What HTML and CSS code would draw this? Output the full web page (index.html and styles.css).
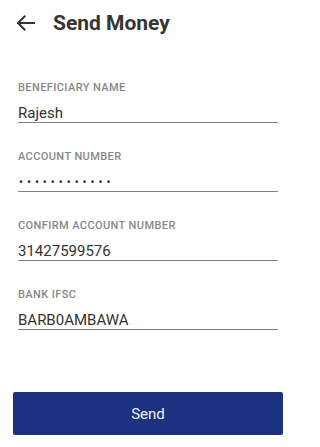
FILE: index.html
```html
<!DOCTYPE html>
<html lang="en">
<head>
<meta charset="utf-8">
<title>Send Money</title>
<link rel="stylesheet" href="styles.css">
</head>
<body>
<div class="screen">
  <header class="header">
    <svg class="back" width="19" height="16" viewBox="0 0 19 16" aria-hidden="true">
      <path d="M18 8H2 M8.5 1.5 L2 8 L8.5 14.5" fill="none" stroke="#333" stroke-width="2" stroke-linecap="square"/>
    </svg>
    <h1 class="title">Send Money</h1>
  </header>
  <form class="form">
    <div class="field">
      <div class="label">BENEFICIARY NAME</div>
      <div class="value">Rajesh</div>
    </div>
    <div class="field">
      <div class="label">ACCOUNT NUMBER</div>
      <div class="value dots">••••••••••••</div>
    </div>
    <div class="field">
      <div class="label">CONFIRM ACCOUNT NUMBER</div>
      <div class="value">31427599576</div>
    </div>
    <div class="field">
      <div class="label">BANK IFSC</div>
      <div class="value">BARB0AMBAWA</div>
    </div>
  </form>
  <button class="send" type="button">Send</button>
</div>
</body>
</html>
```
FILE: styles.css
```css
html, body {
  margin: 0;
  padding: 0;
  background: #ffffff;
}
body {
  font-family: Roboto, "Liberation Sans", Arial, sans-serif;
}
.screen {
  width: 297px;
  height: 447px;
  display: flex;
  flex-direction: column;
}
.header {
  height: 45px;
  display: flex;
  align-items: center;
  padding-left: 16px;
  gap: 18px;
}
.back {
  display: block;
  flex: none;
}
.title {
  margin: 0;
  font-size: 21px;
  font-weight: 700;
  color: #353535;
  line-height: 24px;
}
.form {
  padding: 37px 19px 0 18px;
  display: flex;
  flex-direction: column;
  gap: 28px;
}
.field {
  display: flex;
  flex-direction: column;
  gap: 11px;
}
.label {
  font-size: 11px;
  line-height: 12px;
  font-weight: 500;
  letter-spacing: 0.4px;
  color: #888888;
}
.value {
  font-size: 15px;
  line-height: 17px;
  color: #333333;
  border-bottom: 1px solid #808080;
}
.dots {
  letter-spacing: 3.9px;
  font-size: 12px;
  padding-left: 1px;
}
.send {
  margin: auto 14px 12px 13px;
  height: 43px;
  border: none;
  border-radius: 2px;
  background: #1c3180;
  color: #f2f2f2;
  font-family: Roboto, "Liberation Sans", Arial, sans-serif;
  font-size: 15px;
}
```
